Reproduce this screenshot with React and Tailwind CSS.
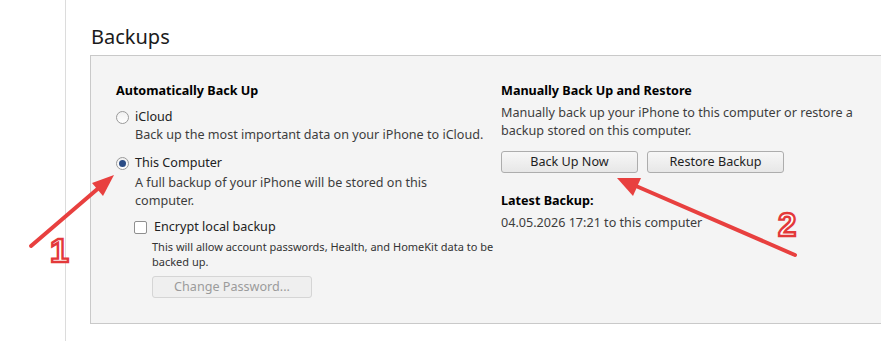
import React from 'react'

const font = "font-['Noto_Sans','Open_Sans',sans-serif]"

const Radio = ({ checked }) => (
  <span className="flex h-[13px] w-[13px] shrink-0 items-center justify-center rounded-full border border-[#9a9a9a] bg-gradient-to-b from-[#f0f0f0] to-[#ffffff]">
    {checked && <span className="h-[7px] w-[7px] rounded-full bg-[#2b4d86]" />}
  </span>
)

const Button = ({ children, disabled, className = '' }) => (
  <button
    type="button"
    className={
      disabled
        ? `h-[22px] rounded-[3px] border border-[#d5d5d5] bg-[#efefef] text-[12.6px] leading-[20px] text-[#9b9b9b] ${className}`
        : `h-[22px] rounded-[3px] border border-[#adadad] bg-gradient-to-b from-[#f7f7f7] to-[#e7e7e7] text-[12.6px] leading-[20px] text-[#1e1e1e] ${className}`
    }
  >
    {children}
  </button>
)

const Arrows = () => (
  <svg className="pointer-events-none absolute inset-0" width="881" height="341" viewBox="0 0 881 341">
    <line x1="31" y1="246" x2="101" y2="186" stroke="#e8403f" strokeWidth="4" strokeLinecap="round" />
    <polygon points="114,175 103,196 92,183" fill="#e8403f" />
    <text x="50" y="262" fontSize="34" fontWeight="bold" fontFamily="Liberation Sans Narrow, Liberation Sans" fill="#fff" stroke="#e3393a" strokeWidth="2.4">1</text>

    <line x1="795" y1="255" x2="636" y2="186" stroke="#e8403f" strokeWidth="4" strokeLinecap="round" />
    <polygon points="617,178 641,178 633,196" fill="#e8403f" />
    <text x="778" y="236" fontSize="33" fontWeight="bold" fontFamily="Liberation Sans" fill="#fff" stroke="#e3393a" strokeWidth="2.4">2</text>
  </svg>
)

export default function App() {
  return (
    <div className={`relative flex h-[341px] w-[881px] overflow-hidden bg-white ${font}`}>
      <div className="w-[66px] shrink-0 border-r border-[#dcdcdc]" />
      <div className="shrink-0 pl-[24px]">
        <h2 className="pl-px pt-[23px] text-[20px] leading-[28px] text-[#1b1b1b]">Backups</h2>
        <div className="mt-[4px] flex w-[820px] border border-[#c9c9c9] bg-[#f4f4f4] pb-[25px] pl-[25px] pt-[26px]">
          <div className="w-[385px] shrink-0">
            <h3 className="text-[12.6px] font-bold leading-[18px] text-black">Automatically Back Up</h3>
            <label className="mt-[8px] flex items-center gap-[6px] text-[12.6px] leading-[18px] text-[#222]">
              <Radio />
              iCloud
            </label>
            <p className="pl-[19px] text-[12.6px] leading-[18px] text-[#3d3d3d]">
              Back up the most important data on your iPhone to iCloud.
            </p>
            <label className="mt-[10px] flex items-center gap-[6px] text-[12.6px] leading-[18px] text-[#222]">
              <Radio checked />
              This Computer
            </label>
            <p className="mt-[2px] w-[330px] pl-[19px] text-[12.6px] leading-[18px] text-[#3d3d3d]">
              A full backup of your iPhone will be stored on this computer.
            </p>
            <div className="pl-[18px]">
              <label className="mt-[8px] flex items-center gap-[7px] text-[12.6px] leading-[18px] text-[#222]">
                <span className="h-[13px] w-[13px] shrink-0 rounded-[2px] border border-[#8f8f8f] bg-white" />
                Encrypt local backup
              </label>
              <div className="pl-[18px]">
                <p className="mt-[3px] w-[345px] text-[11px] leading-[15px] text-[#333]">
                  This will allow account passwords, Health, and HomeKit data to be backed up.
                </p>
                <Button disabled className="mt-[7px] w-[160px]">Change Password...</Button>
              </div>
            </div>
          </div>
          <div className="w-[360px]">
            <h3 className="text-[12.6px] font-bold leading-[18px] text-black">Manually Back Up and Restore</h3>
            <p className="mt-[4px] text-[12.6px] leading-[18px] text-[#3d3d3d]">
              Manually back up your iPhone to this computer or restore a backup stored on this computer.
            </p>
            <div className="mt-[11px] flex gap-[9px]">
              <Button className="w-[137px]">Back Up Now</Button>
              <Button className="w-[137px]">Restore Backup</Button>
            </div>
            <h3 className="mt-[19px] text-[12.6px] font-bold leading-[18px] text-black">Latest Backup:</h3>
            <p className="mt-[4px] text-[12.6px] leading-[18px] text-[#3d3d3d]">04.05.2026 17:21 to this computer</p>
          </div>
        </div>
      </div>
      <Arrows />
    </div>
  )
}
